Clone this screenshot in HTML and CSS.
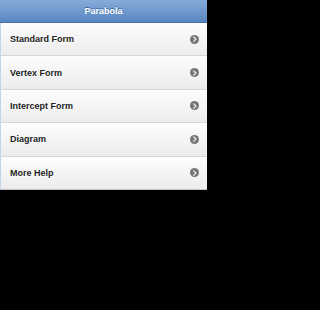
FILE: index.html
```
<!DOCTYPE html>
<html>
<head>
<meta charset="utf-8">
<link rel="stylesheet" href="styles.css">
</head>
<body>
<div class="page">
  <div class="header">Parabola</div>
  <ul class="list">
    <li class="item"><span>Standard Form</span><span class="arrow"></span></li>
    <li class="item"><span>Vertex Form</span><span class="arrow"></span></li>
    <li class="item"><span>Intercept Form</span><span class="arrow"></span></li>
    <li class="item"><span>Diagram</span><span class="arrow"></span></li>
    <li class="item"><span>More Help</span><span class="arrow"></span></li>
  </ul>
</div>
</body>
</html>
```
FILE: styles.css
```
html, body {
  margin: 0;
  padding: 0;
  background: #000;
  font-family: "Liberation Sans", Arial, sans-serif;
}
.page {
  width: 207px;
}
.header {
  height: 22px;
  line-height: 22px;
  text-align: center;
  color: #fff;
  font-weight: bold;
  font-size: 9px;
  text-shadow: 0 -1px 0 #3e6aa3;
  background: linear-gradient(#86abd9, #5a87c2);
  border-bottom: 1px solid #456fa6;
}
.list {
  list-style: none;
  margin: 0;
  padding: 0;
}
.item {
  height: 32.4px;
  display: flex;
  align-items: center;
  justify-content: space-between;
  padding: 0 8px 0 9px;
  background: linear-gradient(#fdfdfd, #ececec);
  border-bottom: 1px solid #d6d6d6;
  font-size: 9px;
  font-weight: bold;
  color: #222;
  text-shadow: 0 1px 0 #fff;
  border-left: 1px solid #c3d3e8;
}
.item:last-child {
  border-bottom: 1px solid #c4c4c4;
}
.arrow {
  width: 9px;
  height: 9px;
  border-radius: 50%;
  background: #777;
  position: relative;
}
.arrow::after {
  content: "";
  position: absolute;
  left: 2px;
  top: 2.5px;
  width: 2.5px;
  height: 2.5px;
  border-top: 1.3px solid #fff;
  border-right: 1.3px solid #fff;
  transform: rotate(45deg);
}
```
